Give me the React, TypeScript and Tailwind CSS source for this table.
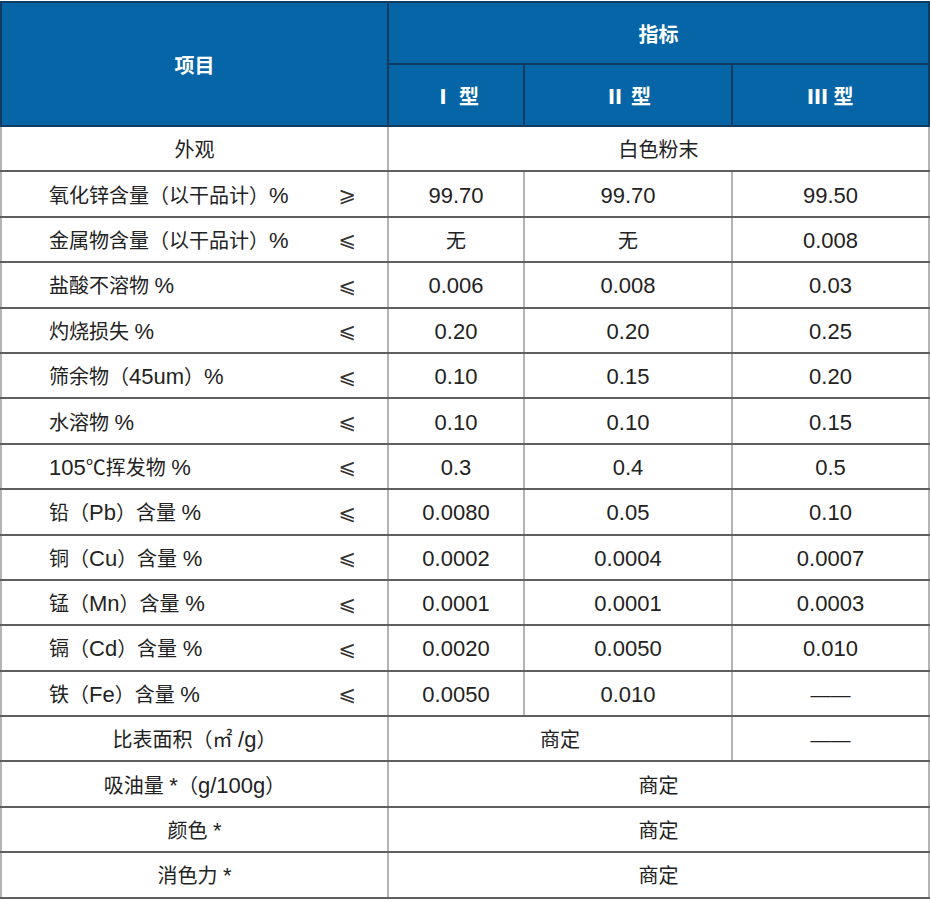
import React from "react";

type Row = { label: string; sign?: string; vals: string[] };

const rows: Row[] = [
    { label: "氧化锌含量（以干品计）%", sign: "⩾", vals: ["99.70", "99.70", "99.50"] },
    { label: "金属物含量（以干品计）%", sign: "⩽", vals: ["无", "无", "0.008"] },
    { label: "盐酸不溶物 %", sign: "⩽", vals: ["0.006", "0.008", "0.03"] },
    { label: "灼烧损失 %", sign: "⩽", vals: ["0.20", "0.20", "0.25"] },
    { label: "筛余物（45um）%", sign: "⩽", vals: ["0.10", "0.15", "0.20"] },
    { label: "水溶物 %", sign: "⩽", vals: ["0.10", "0.10", "0.15"] },
    { label: "105℃挥发物 %", sign: "⩽", vals: ["0.3", "0.4", "0.5"] },
    { label: "铅（Pb）含量 %", sign: "⩽", vals: ["0.0080", "0.05", "0.10"] },
    { label: "铜（Cu）含量 %", sign: "⩽", vals: ["0.0002", "0.0004", "0.0007"] },
    { label: "锰（Mn）含量 %", sign: "⩽", vals: ["0.0001", "0.0001", "0.0003"] },
    { label: "镉（Cd）含量 %", sign: "⩽", vals: ["0.0020", "0.0050", "0.010"] },
    { label: "铁（Fe）含量 %", sign: "⩽", vals: ["0.0050", "0.010", "——"] },
];

// latin runs are set a bit larger than the CJK ones, like in the source doc
const Mix = ({ text }: { text: string }) => (
    <>
        {text.split(/([\x21-\x7e][\x20-\x7e]*[\x21-\x7e]|[\x21-\x7e])/).map((part, i) =>
            /[\x21-\x7e]/.test(part) ? (
                <span key={i} className="text-[22px]">{part}</span>
            ) : (
                <span key={i}>{part}</span>
            )
        )}
    </>
);

const td = "border-x-2 border-x-[#b4b4b4] border-y-2 border-y-[#5f5f5f] text-center align-middle pt-[3px]";
const th = "border-2 border-[#0e3b5e] bg-[#0565a6] text-white font-bold text-center align-middle pt-[2px]";

const Type = ({ n }: { n: string }) => (
    <span className="inline-flex items-center gap-[6px]">
        <span className="font-black">{n}</span>
        <span>型</span>
    </span>
);

export default function App() {
    return (
        <div className="w-[930px] h-[902px] bg-white pt-px text-[20px] text-[#222] leading-none" style={{ fontFamily: '"Liberation Sans", "Noto Sans CJK SC", sans-serif' }}>
            <table className="table-fixed border-collapse border-2 border-[#3c3c3c] w-[928px]">
                <colgroup>
                    <col className="w-[387px]" />
                    <col className="w-[136px]" />
                    <col className="w-[208px]" />
                    <col className="w-[197px]" />
                </colgroup>
                <thead style={{ fontFamily: '"Noto Sans CJK SC", sans-serif' }}>
                    <tr className="h-[62px]">
                        <th rowSpan={2} className={th}>项目</th>
                        <th colSpan={3} className={th}>指标</th>
                    </tr>
                    <tr className="h-[62px]">
                        <th className={th}><Type n="Ⅰ" /></th>
                        <th className={th}><Type n="Ⅱ" /></th>
                        <th className={th}><Type n="Ⅲ" /></th>
                    </tr>
                </thead>
                <tbody>
                    <tr className="h-[45.4px]">
                        <td className={td}>外观</td>
                        <td colSpan={3} className={td}>白色粉末</td>
                    </tr>
                    {rows.map((r) => (
                        <tr key={r.label} className="h-[45.4px]">
                            <td className={td}>
                                <div className="flex items-center justify-between pl-[47px] pr-[31px]">
                                    <span><Mix text={r.label} /></span>
                                    <span style={{ fontFamily: '"DejaVu Sans", sans-serif' }} className="text-[21px] text-[#333]">{r.sign}</span>
                                </div>
                            </td>
                            {r.vals.map((v, i) => (
                                <td key={i} className={td}><Mix text={v} /></td>
                            ))}
                        </tr>
                    ))}
                    <tr className="h-[45.4px]">
                        <td className={td}><Mix text="比表面积（㎡ /g）" /></td>
                        <td colSpan={2} className={td}>商定</td>
                        <td className={td}>——</td>
                    </tr>
                    <tr className="h-[45.4px]">
                        <td className={td}><Mix text="吸油量 *（g/100g）" /></td>
                        <td colSpan={3} className={td}>商定</td>
                    </tr>
                    <tr className="h-[45.4px]">
                        <td className={td}><Mix text="颜色 *" /></td>
                        <td colSpan={3} className={td}>商定</td>
                    </tr>
                    <tr className="h-[45.4px]">
                        <td className={td}><Mix text="消色力 *" /></td>
                        <td colSpan={3} className={td}>商定</td>
                    </tr>
                </tbody>
            </table>
        </div>
    );
}
